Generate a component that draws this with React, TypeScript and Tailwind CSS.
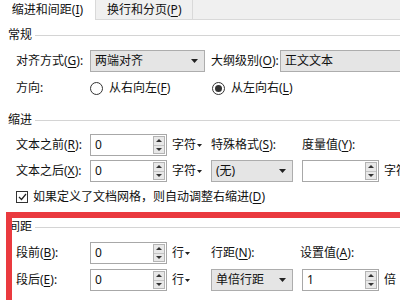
import type { ReactNode } from "react";

const font = "font-['Noto_Sans','Noto_Sans_CJK_SC',sans-serif]";

function U({ c }: { c: string }) {
  return <span className="underline underline-offset-[2px]">{c}</span>;
}

function Header({ title }: { title: string }) {
  return (
    <div className="flex h-[14px] items-center pl-[8px]">
      <span className="text-[12px] leading-[14px]">{title}</span>
      <div className="ml-[3px] h-px flex-1 bg-[#d4d4d4]" />
    </div>
  );
}

function Arrow() {
  return (
    <svg width="7" height="4" viewBox="0 0 7 4" className="shrink-0">
      <path d="M0 0h7L3.5 4z" fill="#222" />
    </svg>
  );
}

function Select({ value, w }: { value: string; w: string }) {
  return (
    <div className={`flex h-[22px] ${w} shrink-0 items-center justify-between border border-[#adadad] bg-[#e5e5e5] pl-[4px] pr-[6px]`}>
      <span className="text-[12px] leading-none">{value}</span>
      <Arrow />
    </div>
  );
}

function Spin({ value, w }: { value: string; w: string }) {
  return (
    <div className={`flex h-[22px] ${w} shrink-0 items-center justify-between border border-[#a8a8a8] bg-white pl-[4px] pr-px`}>
      <span className="text-[12px] leading-none">{value}</span>
      <div className="flex h-[18px] w-[12px] flex-col border border-[#b4b4b4] bg-[#e8e8e8]">
        <div className="flex flex-1 items-center justify-center border-b border-[#c4c4c4]">
          <svg width="6" height="3" viewBox="0 0 6 3">
            <path d="M0 3h6L3 0z" fill="#333" />
          </svg>
        </div>
        <div className="flex flex-1 items-center justify-center">
          <svg width="6" height="3" viewBox="0 0 6 3">
            <path d="M0 0h6L3 3z" fill="#333" />
          </svg>
        </div>
      </div>
    </div>
  );
}

function Unit({ text, drop, w }: { text: string; drop?: boolean; w: string }) {
  return (
    <div className={`flex ${w} shrink-0 items-center pl-[5px] text-[12px]`}>
      <span>{text}</span>
      {drop && (
        <svg width="5" height="3" viewBox="0 0 5 3" className="ml-px">
          <path d="M0 0h5L2.5 3z" fill="#222" />
        </svg>
      )}
    </div>
  );
}

function Label({ children, w }: { children: ReactNode; w: string }) {
  return <div className={`${w} shrink-0 whitespace-nowrap text-[12px] leading-[14px]`}>{children}</div>;
}

function Radio({ on, label }: { on?: boolean; label: ReactNode }) {
  return (
    <div className="flex items-center gap-[6px] text-[12px] leading-[14px]">
      <div className="flex h-[13px] w-[13px] items-center justify-center rounded-full border border-[#333]">
        {on && <div className="h-[7px] w-[7px] rounded-full bg-[#333]" />}
      </div>
      <span>{label}</span>
    </div>
  );
}

export default function App() {
  return (
    <div className={`relative h-[300px] w-[400px] overflow-hidden bg-white text-[#111] ${font}`}>
      {/* Tabs */}
      <div className="flex h-[20px] bg-[#f0f0f0]">
        <div className="flex w-[96px] items-center justify-center border-r border-[#d9d9d9] bg-white text-[12px]">
          缩进和间距(<U c="I" />)
        </div>
        <div className="flex w-[97px] items-center border-r border-b border-[#d9d9d9] pl-[11px] text-[12px]">
          换行和分页(<U c="P" />)
        </div>
        <div className="flex-1 border-b border-[#d9d9d9]" />
      </div>

      <div className="mt-[8px]">
        <Header title="常规" />
      </div>
      <div className="mt-[8px] flex h-[22px] items-center pl-[16px]">
        <Label w="w-[74px]">对齐方式(<U c="G" />):</Label>
        <Select value="两端对齐" w="w-[115px]" />
        <Label w="ml-[6px] w-[69px]">大纲级别(<U c="O" />):</Label>
        <div className="flex h-[22px] w-[150px] shrink-0 items-center border border-[#adadad] bg-[#e5e5e5] pl-[4px] text-[12px]">
          正文文本
        </div>
      </div>
      <div className="mt-[6px] flex h-[20px] items-center pl-[16px]">
        <Label w="w-[74px]">方向:</Label>
        <div className="w-[122px] shrink-0">
          <Radio label={<>从右向左(<U c="F" />)</>} />
        </div>
        <Radio on label={<>从左向右(<U c="L" />)</>} />
      </div>

      <div className="mt-[15px]">
        <Header title="缩进" />
      </div>
      <div className="mt-[7px] flex h-[22px] items-center pl-[16px]">
        <Label w="w-[74px]">文本之前(<U c="R" />):</Label>
        <Spin value="0" w="w-[77px]" />
        <Unit text="字符" drop w="w-[44px]" />
        <Label w="w-[91px]">特殊格式(<U c="S" />):</Label>
        <Label w="w-[80px]">度量值(<U c="Y" />):</Label>
      </div>
      <div className="mt-[4px] flex h-[22px] items-center pl-[16px]">
        <Label w="w-[74px]">文本之后(<U c="X" />):</Label>
        <Spin value="0" w="w-[77px]" />
        <Unit text="字符" drop w="w-[44px]" />
        <Select value="(无)" w="w-[82px]" />
        <div className="ml-[9px]">
          <Spin value="" w="w-[77px]" />
        </div>
        <Unit text="字符" w="w-[40px]" />
      </div>
      <div className="mt-[7px] flex h-[16px] items-center gap-[5px] pl-[16px] text-[12px]">
        <div className="flex h-[12px] w-[12px] items-center justify-center border border-[#333]">
          <svg width="9" height="8" viewBox="0 0 9 8">
            <path d="M1 4l2.5 2.5L8 1" fill="none" stroke="#222" strokeWidth="1.2" />
          </svg>
        </div>
        <span>如果定义了文档网格，则自动调整右缩进(<U c="D" />)</span>
      </div>

      <div className="mt-[15px]">
        <Header title="间距" />
      </div>
      <div className="mt-[8px] flex h-[22px] items-center pl-[16px]">
        <Label w="w-[74px]">段前(<U c="B" />):</Label>
        <Spin value="0" w="w-[77px]" />
        <Unit text="行" drop w="w-[44px]" />
        <Label w="w-[89px]">行距(<U c="N" />):</Label>
        <Label w="w-[80px]">设置值(<U c="A" />):</Label>
      </div>
      <div className="mt-[5px] flex h-[22px] items-center pl-[16px]">
        <Label w="w-[74px]">段后(<U c="E" />):</Label>
        <Spin value="0" w="w-[77px]" />
        <Unit text="行" drop w="w-[44px]" />
        <Select value="单倍行距" w="w-[82px]" />
        <div className="ml-[9px]">
          <Spin value="1" w="w-[77px]" />
        </div>
        <Unit text="倍" w="w-[30px]" />
      </div>

      {/* red annotation frame */}
      <div className="pointer-events-none absolute left-[6px] top-[212px] h-[120px] w-[420px] border-l-[6px] border-t-[6px] border-[#ea3a3f]" />
    </div>
  );
}
